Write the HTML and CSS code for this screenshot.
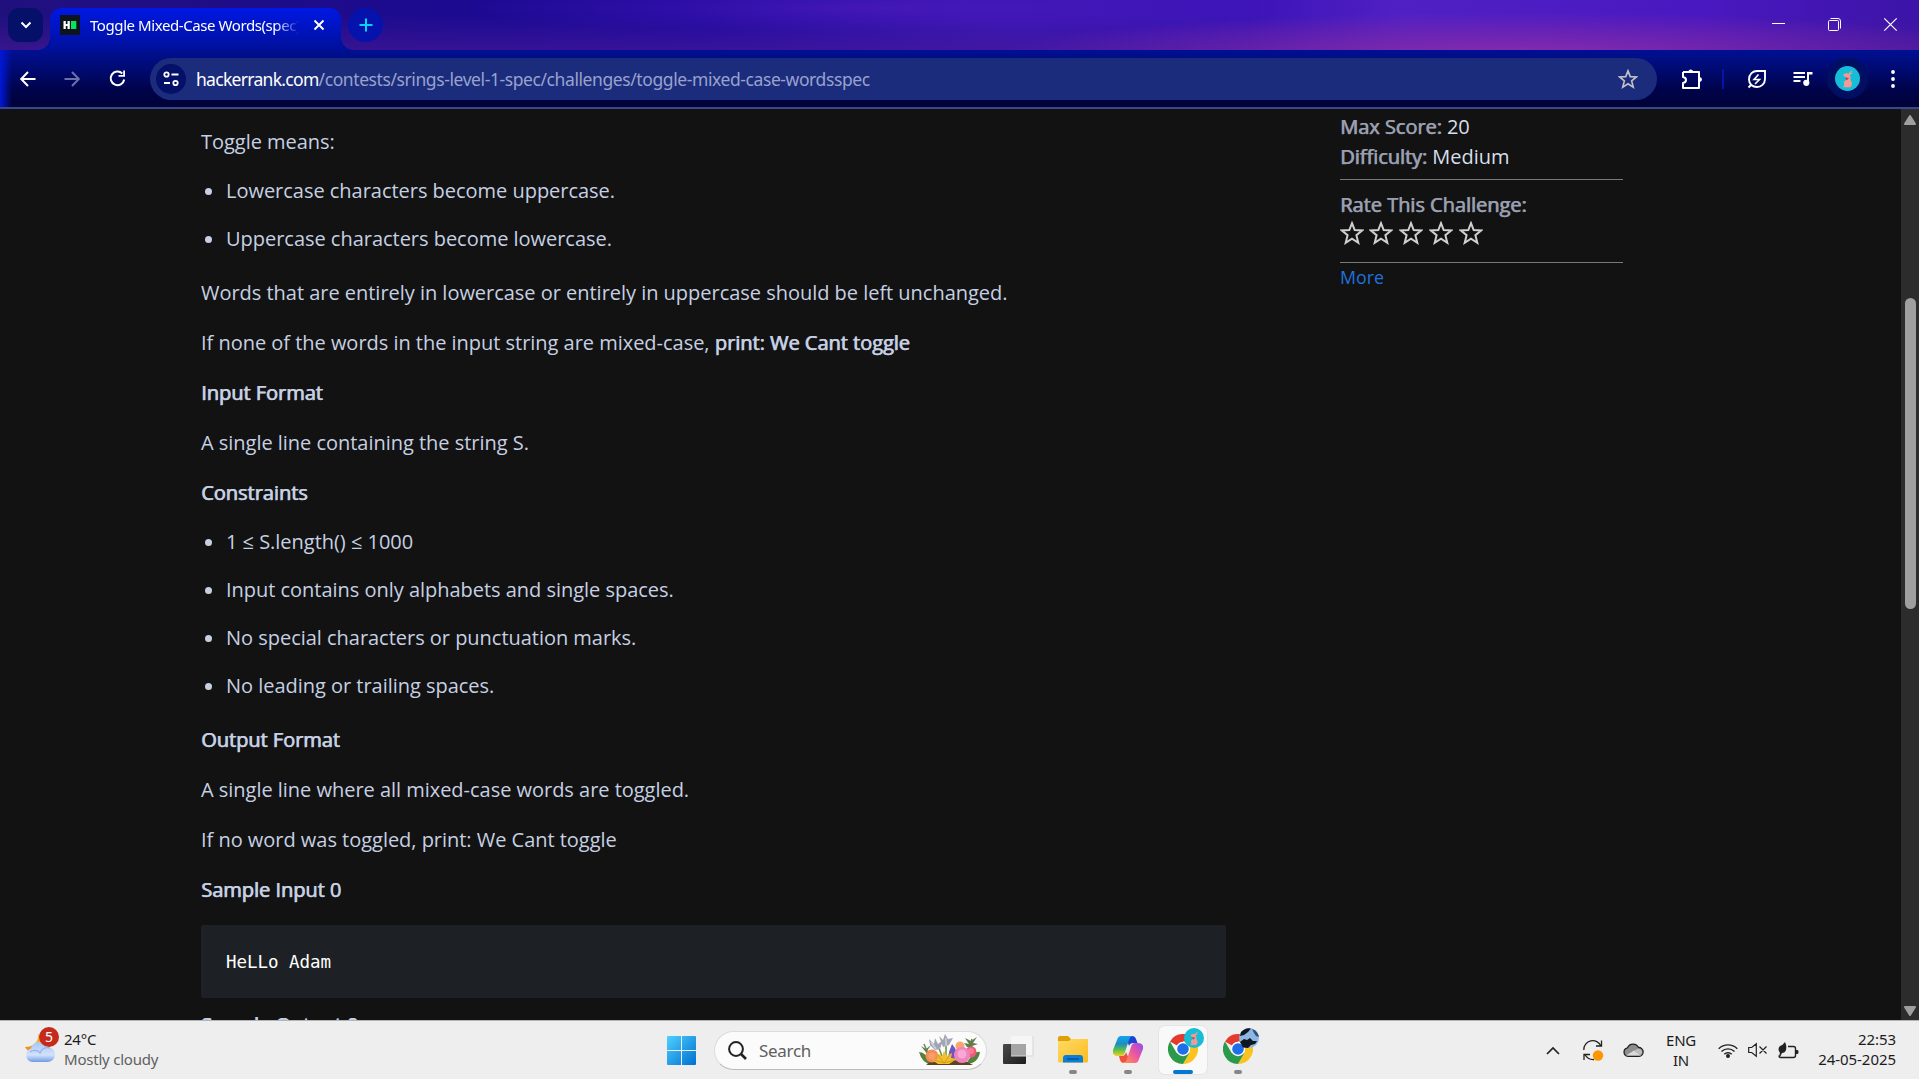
FILE: index.html
```html
<!DOCTYPE html>
<html lang="en">
<head>
<meta charset="utf-8">
<title>Toggle Mixed-Case Words(spec)</title>
<link rel="stylesheet" href="styles.css">
</head>
<body>
<svg width="0" height="0" class="defs">
  <defs>
    <linearGradient id="win" x1="0" y1="0" x2="1" y2="1"><stop offset="0" stop-color="#4fd0ff"/><stop offset="1" stop-color="#006fd0"/></linearGradient>
    <linearGradient id="cloud" x1="0" y1="0" x2="0" y2="1"><stop offset="0" stop-color="#a9c6f5"/><stop offset=".65" stop-color="#d3e1fa"/><stop offset="1" stop-color="#6f9ae8"/></linearGradient>
    <linearGradient id="moon" x1="1" y1="0" x2="0" y2="1"><stop offset="0" stop-color="#fac62e"/><stop offset="1" stop-color="#f0831c"/></linearGradient>
    <linearGradient id="folder" x1="0" y1="0" x2="1" y2="1"><stop offset="0" stop-color="#ffdb66"/><stop offset="1" stop-color="#fdbb1e"/></linearGradient>
    <linearGradient id="dark" x1="0" y1="0" x2="1" y2="1"><stop offset="0" stop-color="#4a4a4a"/><stop offset="1" stop-color="#1c1c1c"/></linearGradient>
    <linearGradient id="cpl" x1="0" y1="0" x2="0" y2="1"><stop offset="0" stop-color="#12a5f0"/><stop offset=".4" stop-color="#1c8fbe"/><stop offset=".7" stop-color="#5fbf4a"/><stop offset="1" stop-color="#f2d21c"/></linearGradient>
    <linearGradient id="cpr" x1="1" y1="0" x2="0" y2="1"><stop offset="0" stop-color="#8e4bf0"/><stop offset=".5" stop-color="#f0579c"/><stop offset="1" stop-color="#fb9a4a"/></linearGradient>
    <symbol id="star" viewBox="0 0 24 24"><path d="M12 2.200l2.700 6.900 7.400.400-5.700 4.700 1.900 7.600-6.300-4.100-6.300 4.100 1.900-7.600L1.900 9.500l7.400-.400z" fill="none" stroke="currentColor" stroke-width="2" stroke-linejoin="miter"/></symbol>
    <symbol id="chrome" viewBox="0 0 30 30">
      <path d="M15 15L2 7.500A15 15 0 0 1 28 7.500H15z" fill="#e33b2e"/>
      <path d="M28 7.500A15 15 0 0 1 15 30L21.500 18.700 15 7.500z" fill="#fcc31e"/>
      <path d="M2 7.500A15 15 0 0 0 15 30L21.500 18.700 15 15 8.500 18.700z" fill="#2a9a48"/>
      <circle cx="15" cy="15" r="7.200" fill="#fff"/><circle cx="15" cy="15" r="5.800" fill="#1f6fe8"/>
    </symbol>
    <symbol id="rabbit" viewBox="0 0 24 24">
      <circle cx="12" cy="12" r="12" fill="#16bdd6"/>
      <path d="M17.500 4.200Q14.500 4.500 12.800 7.500L11 6.800 8 8 8.200 9.500 10.500 11 11 13 8.500 15 8.800 19 7.500 20.500H14.500Q18 17.500 14.800 13.500L15 10.500 14 8.800 17.500 6.500 14.500 7z" fill="#f39a96"/>
      <path d="M10 11l3.500.5-2.500 2.500z" fill="#a84650"/>
    </symbol>
  </defs>
</svg>

<header class="tabstrip">
  <div class="tab-search"><svg width="12" height="8" viewBox="0 0 12 8"><path d="M1.500 1.500L6 6l4.500-4.500" fill="none" stroke="#fff" stroke-width="2"/></svg></div>
  <div class="tab">
    <svg class="favicon" width="20" height="20" viewBox="0 0 20 20"><rect width="20" height="20" fill="#0e141e"/><path d="M3.500 6h2.300v3h1.700V6h2.300v8H7.500v-3H5.800v3H3.500z" fill="#fff"/><rect x="11" y="6" width="5.300" height="8" fill="#05e45f"/></svg>
    <span class="tab-title">Toggle Mixed-Case Words(spec)</span>
    <svg width="12" height="12" viewBox="0 0 12 12"><path d="M1.500 1.500l9 9m0-9l-9 9" stroke="#fff" stroke-width="1.900"/></svg>
  </div>
  <div class="new-tab"><svg width="14" height="14" viewBox="0 0 14 14"><path d="M7 .5v13M.5 7h13" stroke="#06d5fa" stroke-width="2"/></svg></div>
  <div class="window-controls">
    <svg width="13" height="13" viewBox="0 0 13 13"><path d="M0 5.500h13" stroke="#fff"/></svg>
    <svg width="13" height="13" viewBox="0 0 13 13" fill="none" stroke="#fff"><rect x=".5" y="2.500" width="10" height="10" rx="1"/><path d="M2.500.5H10a2.500 2.500 0 0 1 2.500 2.500v7.500"/></svg>
    <svg width="13" height="13" viewBox="0 0 13 13"><path d="M.3.300l12.400 12.400m0-12.400L.3 12.700" stroke="#fff" stroke-width="1.200"/></svg>
  </div>
</header>

<nav class="toolbar">
  <svg class="back" width="16" height="16" viewBox="0 0 16 16"><path d="M15.500 8H1.500M8 1L1.200 8 8 15" fill="none" stroke="#fff" stroke-width="2"/></svg>
  <svg class="forward" width="16" height="16" viewBox="0 0 16 16"><path d="M.5 8h14M8 1l6.800 7L8 15" fill="none" stroke="#6b70a8" stroke-width="2"/></svg>
  <svg class="reload" width="17" height="17" viewBox="0 0 17 17"><path d="M13.300 3.500A6.800 6.800 0 1 0 15.200 9.500" fill="none" stroke="#fff" stroke-width="2"/><path d="M16 .5v6.300H9.500V5h4.700V.5z" fill="#fff"/></svg>
  <div class="omnibox">
    <div class="site-info"><svg width="16" height="16" viewBox="0 0 16 16" fill="none" stroke="#fff" stroke-width="1.800"><circle cx="3.500" cy="3.500" r="2.200"/><path d="M8.500 3.500h7M1 12h6"/><circle cx="12.500" cy="12" r="2.200"/></svg></div>
    <span class="url"><b>hackerrank.com</b>/contests/srings-level-1-spec/challenges/toggle-mixed-case-wordsspec</span>
    <svg class="bookmark" width="20" height="20"><use href="#star"/></svg>
  </div>
  <svg class="ext" width="21" height="22" viewBox="0 0 21 22"><path d="M2 4h16v4.500M18 14v6H2v-5q3-.5 3-3T2 9V4" fill="none" stroke="#fff" stroke-width="2" stroke-linejoin="round"/><path d="M18 8v6" stroke="#fff" stroke-width="2"/><path d="M7.200 3.500a2.600 2.600 0 0 1 5 0zM18.500 9a2.500 2.500 0 0 1 0 5z" fill="#fff"/></svg>
  <span class="divider"></span>
  <svg class="leaf" width="20" height="20" viewBox="0 0 20 20" fill="none" stroke="#fff" stroke-width="1.900"><path d="M18 2v8c0 5-4 8-8 8-4.500 0-8-3-8-7.500C2 5 6 2 10 2zM1.500 18.500L4.500 15.500"/><path d="M11.500 5.500L7 10.500h5.500L8 15" stroke-width="1.600"/></svg>
  <svg class="music" width="20" height="16" viewBox="0 0 20 16"><path d="M.5 2H12M.5 6H12M.5 10h7" stroke="#fff" stroke-width="2"/><path d="M14 1h5.500v2.500H16v8h-2z" fill="#fff"/><circle cx="13.300" cy="11.800" r="3.100" fill="#fff"/></svg>
  <div class="profile"><svg width="25" height="25"><use href="#rabbit"/></svg></div>
  <svg class="kebab" width="4" height="18" viewBox="0 0 4 18" fill="#fff"><circle cx="2" cy="2" r="1.900"/><circle cx="2" cy="9" r="1.900"/><circle cx="2" cy="16" r="1.900"/></svg>
</nav>

<main class="page">
  <article class="challenge">
    <p>Toggle means:</p>
    <ul>
      <li>Lowercase characters become uppercase.</li>
      <li>Uppercase characters become lowercase.</li>
    </ul>
    <p>Words that are entirely in lowercase or entirely in uppercase should be left unchanged.</p>
    <p>If none of the words in the input string are mixed-case, <strong>print: We Cant toggle</strong></p>
    <p><strong>Input Format</strong></p>
    <p>A single line containing the string S.</p>
    <p><strong>Constraints</strong></p>
    <ul>
      <li>1 ≤ S.length() ≤ 1000</li>
      <li>Input contains only alphabets and single spaces.</li>
      <li>No special characters or punctuation marks.</li>
      <li>No leading or trailing spaces.</li>
    </ul>
    <p><strong>Output Format</strong></p>
    <p>A single line where all mixed-case words are toggled.</p>
    <p>If no word was toggled, print: We Cant toggle</p>
    <p><strong>Sample Input 0</strong></p>
    <pre>HeLLo Adam</pre>
    <p><strong>Sample Output 0</strong></p>
  </article>
  <aside class="details">
    <p><strong>Max Score:</strong> 20</p>
    <p><strong>Difficulty:</strong> Medium</p>
    <div class="rating">
      <p><strong>Rate This Challenge:</strong></p>
      <div class="stars">
        <svg width="24" height="24"><use href="#star"/></svg><svg width="24" height="24"><use href="#star"/></svg><svg width="24" height="24"><use href="#star"/></svg><svg width="24" height="24"><use href="#star"/></svg><svg width="24" height="24"><use href="#star"/></svg>
      </div>
    </div>
    <a class="more">More</a>
  </aside>
  <div class="scrollbar">
    <svg width="12" height="10" viewBox="0 0 12 10"><path d="M6 1l5 8H1z" fill="#9f9f9f" stroke="#9f9f9f" stroke-width="2" stroke-linejoin="round"/></svg>
    <div class="thumb"></div>
    <svg class="down" width="12" height="10" viewBox="0 0 12 10"><path d="M6 9l5-8H1z" fill="#9f9f9f" stroke="#9f9f9f" stroke-width="2" stroke-linejoin="round"/></svg>
  </div>
</main>

<footer class="taskbar">
  <div class="weather">
    <svg width="35" height="38" viewBox="0 0 35 38">
      <path d="M13 7c1 7-4 13-13 13 2 4 8 7 13 4s8-9 5-14z" fill="url(#moon)"/>
      <path d="M7 35a7 7 0 0 1-1-13.500 8.500 8.500 0 0 1 16-1.500 7.500 7.500 0 0 1 1 15z" fill="url(#cloud)"/>
      <path d="M5 25c5-3 9-1 10 1 2-5 6-6 10-5" fill="none" stroke="#8fb2f0" stroke-width="1.200"/>
      <circle cx="24" cy="10" r="10" fill="#c42b1c"/>
      <text x="24" y="15" text-anchor="middle" fill="#fff" class="badge-text">5</text>
    </svg>
    <div class="weather-text"><span>24°C</span><span class="muted">Mostly cloudy</span></div>
  </div>
  <svg width="29" height="29" viewBox="0 0 29 29" fill="url(#win)"><path d="M1 0h13v14H0V1a1 1 0 0 1 1-1zM15 0h13a1 1 0 0 1 1 1v13H15zM0 15h14v14H1a1 1 0 0 1-1-1zM15 15h14v13a1 1 0 0 1-1 1H15z"/></svg>
  <div class="search">
    <svg width="19" height="19" viewBox="0 0 19 19" fill="none" stroke="#222"><circle cx="8" cy="8" r="6.900" stroke-width="2"/><path d="M13 13l5 5" stroke-width="2.600"/></svg>
    <span>Search</span>
    <svg class="flowers" width="61" height="32" viewBox="0 0 61 32">
      <path d="M0 18q7 0 14 13Q3 30 0 18zM61 18q-6-2-14 12 12 0 14-12z" fill="#54813b"/>
      <path d="M5 10l5 12M20 14l5 14M27 10v18M33 14l-6 14M53 5l-5 16" stroke="#668e48" stroke-width="1.500"/>
      <path d="M2 12l5 3 5-4-4 6 6-1-5 5zM46 4l6 3 6-4-4 6 5 1-6 2 4 3-9-2-3-4 5 1z" fill="#5f7d4b"/>
      <path d="M10 5l5 5 1-6 3 6 5-4-3 9-5 1-5-5zM20 2l4 4 2-6 3 5 5-1-4 7-6 2z" fill="#a2a5b3"/>
      <path d="M12 8l5 7M27 4l0 8" stroke="#d0d2dc" stroke-width="1.500"/>
      <path d="M7 31h47l-12-6H16z" fill="#5a4421"/>
      <circle cx="13" cy="22" r="6.500" fill="#f68b55"/><circle cx="13" cy="22" r="3.500" fill="#fa9d6a"/>
      <circle cx="41" cy="12" r="4.500" fill="#fba56e"/><circle cx="52" cy="18" r="5.500" fill="#f1597b"/><circle cx="52" cy="17" r="3" fill="#f77e92"/>
      <path d="M33 10l3 4 2 5-1 8-6-3-1-6z" fill="#6c57c2"/>
      <circle cx="43" cy="21" r="8" fill="#ef83c0"/><circle cx="43" cy="20" r="4.500" fill="#f8a8d4"/>
      <path d="M25 17l3 5 5-3-1 5 6 1-8 5H19l-6-4 6-1-1-6 5 3z" fill="#f1c02f"/><path d="M19 21l6 8 6-8M15 26l10 3 11-3" stroke="#d59819" fill="none"/>
    </svg>
  </div>
  <svg class="task-view" width="30" height="28" viewBox="0 0 30 28"><rect y="8" width="23" height="20" rx="1" fill="url(#dark)"/><rect x="8" width="22" height="20" rx="1" fill="#f6f6f6"/><path d="M8 8h15v12H8z" fill="#a5a5a5"/><path d="M30 0v20H8" fill="none" stroke="#d6d6d6"/></svg>
  <div class="app running"><svg width="30" height="30" viewBox="0 0 30 30"><path d="M0 3q0-2 2-2h8l3 3h15q2 0 2 2v5H0z" fill="#dda007"/><path d="M0 6h11l2-2h17v22q0 1.500-1.500 1.500h-27Q0 27.500 0 26z" fill="url(#folder)"/><path d="M5 27.500V23q0-3 3-3h14q3 0 3 3v4.500z" fill="#0a7ed6"/><path d="M9 24h12" stroke="#07509b" stroke-width="1.500"/></svg></div>
  <div class="app running"><svg width="30" height="30" viewBox="0 0 30 30"><path d="M19 1q3 0 4 3l1.500 4H20q-3 0-4 3l-3-9z" fill="#1e43d6"/><path d="M8 1h12q-3 0-4 4l-4 12q-1 4-4 4H5q-6 0-5-6L4 5Q5 1 8 1z" fill="url(#cpl)"/><path d="M10 28q-2 0-3-3l-1-4h3q3 0 4-4l4 9z" fill="#ef533e"/><path d="M22 28H10q3 0 4-4l4-12q1-4 4-4h3q6 0 5 6l-4 10q-1 4-4 4z" fill="url(#cpr)"/></svg></div>
  <div class="app running active"><svg width="38" height="38" viewBox="0 0 38 38"><use href="#chrome" y="7" width="30" height="30"/><use href="#rabbit" x="16" y="1" width="20" height="20"/></svg></div>
  <div class="app running second"><svg width="38" height="38" viewBox="0 0 38 38"><use href="#chrome" y="7" width="30" height="30"/><circle cx="26" cy="11" r="10" fill="#8db6e2"/><path d="M18 5q5-5 10-3.500l-3 3.500-4 3-4 1zM17 15l4-3 3 1 3-2 3 3 4 0-2 3-4 1-3 3-5-.5z" fill="#101723"/><path d="M29 2q6 2 7 8l-3-1-2-3z" fill="#314f78"/></svg></div>
  <div class="tray">
    <svg width="14" height="9" viewBox="0 0 14 9"><path d="M1 8l6-6 6 6" fill="none" stroke="#222" stroke-width="1.700"/></svg>
    <svg class="sync" width="20" height="21" viewBox="0 0 20 21"><path d="M.8 10A9 9 0 0 1 18 6M18.500.5V6H13M11 19.500Q5 20 1.500 14M1 20v-5.500h6" fill="none" stroke="#222" stroke-width="1.300"/><circle cx="15" cy="15.500" r="5.200" fill="#ff9500"/></svg>
    <svg class="onedrive" width="21" height="14" viewBox="0 0 21 14"><path d="M5 13.300a4.300 4.300 0 0 1-.5-8.500 6 6 0 0 1 11-.3 4.400 4.400 0 0 1 .5 8.800z" fill="#8d8d8d" stroke="#222" stroke-width="1.300"/><path d="M3 12.500l8-5 7 5z" fill="#dadada"/><path d="M11 7.500l4.500-2q4 1 3.500 4.500l-2 2z" fill="#bdbdbd"/></svg>
    <div class="lang"><span>ENG</span><span>IN</span></div>
    <svg class="wifi" width="20" height="15" viewBox="0 0 20 15" fill="none" stroke="#222" stroke-width="1.400"><path d="M.7 5.800a13 13 0 0 1 18.600 0M3.500 8.600a9.200 9.200 0 0 1 13 0M6.300 11.300a5.300 5.300 0 0 1 7.400 0"/><circle cx="10" cy="13" r="1.300" fill="#222"/></svg>
    <svg class="mute" width="19" height="14" viewBox="0 0 19 14" fill="none" stroke="#222" stroke-width="1.200"><path d="M.7 4.500h3L8.300.7v12.600L3.700 9.500h-3zM11.500 3.500l7 7m0-7l-7 7"/></svg>
    <svg class="battery" width="21" height="17" viewBox="0 0 21 17"><path d="M10 4.500h5.500q2 0 2 2v7q0 2-2 2h-13Q1 15.500 1 13.500" fill="none" stroke="#222" stroke-width="1.400"/><path d="M18 8h1.500q1 0 1 2t-1 2H18z" fill="#222"/><path d="M7 0q2 4 1 8-1 3-4 3l-2 4-1-1 1-3Q-1 7 2 4q3-1 5-4z" fill="#222"/></svg>
    <div class="clock"><span>22:53</span><span>24-05-2025</span></div>
  </div>
</footer>
</body>
</html>
```
FILE: styles.css
```css
* { box-sizing: border-box; }
body {
  margin: 0;
  height: 100vh;
  display: flex;
  flex-direction: column;
  overflow: hidden;
  background: #121212;
  font-family: "Open Sans", "Noto Sans", sans-serif;
}
svg { display: block; flex: none; overflow: visible; }
.defs { position: absolute; }

/* Tab strip */
.tabstrip {
  flex: none;
  height: 50px;
  display: flex;
  padding: 8px 22px 0 8px;
  background:
    radial-gradient(ellipse 520px 44px at 1520px 56px, rgba(160, 50, 180, .75), transparent),
    radial-gradient(ellipse 420px 24px at 880px 8px, rgba(85, 28, 190, .55), transparent),
    linear-gradient(rgba(70, 25, 150, 0) 30%, rgba(70, 25, 150, .6)),
    linear-gradient(90deg, #20107e, #1c0a92 480px, #200aa0 700px, #3815b4 980px, #3c14b8 1250px, #5020c4 1400px, #4a18c0 1700px, #3c14a8);
}
.tab-search {
  width: 35px;
  height: 34px;
  border-radius: 11px;
  background: #051068;
  display: grid;
  place-items: center;
}
.tab {
  position: relative;
  width: 291px;
  height: 42px;
  margin-left: 7px;
  padding: 0 16px 8px 10px;
  display: flex;
  align-items: center;
  border-radius: 12px 12px 0 0;
  background: linear-gradient(#0018e4, #00109a);
}
.tab::before, .tab::after {
  content: "";
  position: absolute;
  bottom: 0;
  width: 12px;
  height: 12px;
}
.tab::before { left: -12px; background: radial-gradient(circle at 0 0, transparent 11.500px, #00109e 12px); }
.tab::after { right: -12px; background: radial-gradient(circle at 100% 0, transparent 11.500px, #00109e 12px); }
.tab-title {
  width: 211px;
  margin: 0 15px 0 10px;
  overflow: hidden;
  white-space: nowrap;
  color: #fff;
  font: 15px "Noto Sans", sans-serif;
  letter-spacing: -.42px;
  mask-image: linear-gradient(90deg, #000 185px, transparent 210px);
}
.new-tab {
  width: 35px;
  height: 34px;
  margin-left: 7px;
  border-radius: 50%;
  background: #0612ac;
  display: grid;
  place-items: center;
}
.window-controls { display: flex; gap: 43px; margin: 10px 0 0 auto; }

/* Toolbar */
.toolbar {
  flex: none;
  height: 59px;
  display: flex;
  align-items: center;
  padding: 0 24px 0 20px;
  border-bottom: 2px solid #3b478c;
  background:
    linear-gradient(90deg, #0018d8, rgba(0, 16, 150, 0) 12px),
    linear-gradient(#001094, #000a70 35%, #00034a 70%, #000238);
}
.forward { margin-left: 28px; }
.reload { margin-left: 29px; }
.omnibox {
  width: 1507px;
  height: 42px;
  margin-left: 24px;
  padding: 0 19px 0 6px;
  display: flex;
  align-items: center;
  border-radius: 21px;
  background: #1c2c7c;
}
.site-info {
  width: 30px;
  height: 30px;
  border-radius: 50%;
  background: #051068;
  display: grid;
  place-items: center;
}
.url { margin-left: 10px; color: #98a2cd; font: 17.500px "Noto Sans", sans-serif; letter-spacing: -.41px; white-space: nowrap; }
.url b { color: #fff; font-weight: 400; letter-spacing: -.7px; }
.bookmark { margin-left: auto; color: #c0c0c8; }
.ext { margin-left: 24px; }
.divider { width: 2px; height: 20px; margin-left: 20px; background: #0515a8; }
.leaf { margin-left: 23px; }
.music { margin-left: 26px; }
.profile {
  width: 41px;
  height: 41px;
  margin-left: 14px;
  border-radius: 50%;
  background: #000f62;
  display: grid;
  place-items: center;
}
.kebab { margin-left: auto; }

/* Challenge page */
.page {
  flex: 1;
  min-height: 0;
  display: flex;
  overflow: hidden;
  color: #c6d0e2;
  font-size: 20px;
  line-height: 30px;
  letter-spacing: -.025px;
}
.challenge { width: 1025px; margin-left: 201px; padding-top: 18px; }
.challenge p { margin: 0 0 20px; }
.challenge ul {
  margin: -1px 0 24px;
  padding-left: 25px;
  display: flex;
  flex-direction: column;
  gap: 18px;
  list-style: none;
}
.challenge li { display: flex; align-items: center; }
.challenge li::before {
  content: "";
  width: 7px;
  height: 7px;
  margin: 0 14px 0 -21px;
  border-radius: 50%;
  background: #c6d0e2;
}
strong { font-weight: 400; -webkit-text-stroke: .25px currentColor; text-shadow: .7px 0 currentColor; }
.challenge pre {
  height: 73px;
  margin: 0 0 12px;
  padding: 1px 25px 0;
  border-radius: 2px;
  background: #1d2024;
  color: #fff;
  font: 17.500px/73px "DejaVu Sans Mono", monospace;
}
.details { width: 283px; margin-left: 114px; padding-top: 3px; color: #d8dfea; }
.details p { margin: 0; }
.details strong { color: #999fb0; }
.rating {
  height: 84px;
  margin-top: 7px;
  padding-top: 10px;
  border: solid #76797f;
  border-width: 1px 0;
}
.stars { display: flex; gap: 5.800px; margin: 1px 0 0 -.5px; color: #d0d0d0; }
.more { display: block; margin-top: -1px; color: #2071dc; font-size: 17.800px; }
.scrollbar {
  width: 18px;
  margin-left: auto;
  padding: 6px 0 4px;
  display: flex;
  flex-direction: column;
  align-items: center;
  background: #2c2c2c;
}
.thumb { width: 11px; height: 311px; margin-top: 173px; border-radius: 6px; background: #9f9f9f; }
.down { margin-top: auto; }

/* Taskbar */
.taskbar {
  flex: none;
  height: 59px;
  display: flex;
  align-items: center;
  padding-right: 23px;
  border-top: 1px solid #b4b4b4;
  background: #eee;
  color: #1c1c1c;
  font: 15px/20px "Noto Sans", sans-serif;
}
.weather { width: 667px; padding: 0 0 5px 25px; display: flex; gap: 4px; }
.weather-text, .lang, .clock { display: flex; flex-direction: column; }
.weather-text { padding-top: 2px; letter-spacing: -.22px; }
.badge-text { font-size: 14px; }
.muted { color: #606060; }
.search {
  width: 273px;
  height: 39px;
  margin: 0 16px 0 18px;
  padding: 0 6px 0 13px;
  display: flex;
  align-items: center;
  border: 1px solid #dcdcdc;
  border-bottom-color: #bbb;
  border-radius: 20px;
  background: #fbfbfb;
  color: #606060;
  font-size: 17px;
}
.search span { margin-left: 12px; padding-top: 1px; letter-spacing: -.3px; }
.flowers { margin-left: auto; }
.task-view { margin-right: 16px; }
.app {
  position: relative;
  width: 48px;
  height: 48px;
  margin-right: 7px;
  display: grid;
  place-items: center;
  border-radius: 6px;
}
.app::after {
  content: "";
  position: absolute;
  left: 20px;
  bottom: 0;
  width: 8px;
  height: 4px;
  border-radius: 2px;
  background: #868686;
}
.app.active { background: #f9f9f9; box-shadow: 0 0 0 1px #e4e4e4; }
.app.active::after { left: 14px; width: 20px; background: #0078d4; }
.app.active svg, .app.second svg { margin: -8px 0 0 8px; }
.tray { margin-left: auto; display: flex; align-items: center; letter-spacing: -.3px; }
.sync { margin-left: 23px; }
.onedrive { margin-left: 20px; }
.lang { width: 40px; margin-left: 17px; padding-bottom: 1px; text-align: center; }
.wifi { margin-left: 17px; }
.mute { margin-left: 10px; }
.battery { margin-left: 11px; }
.clock { width: 97px; padding-bottom: 2px; text-align: right; letter-spacing: -.05px; }
```
